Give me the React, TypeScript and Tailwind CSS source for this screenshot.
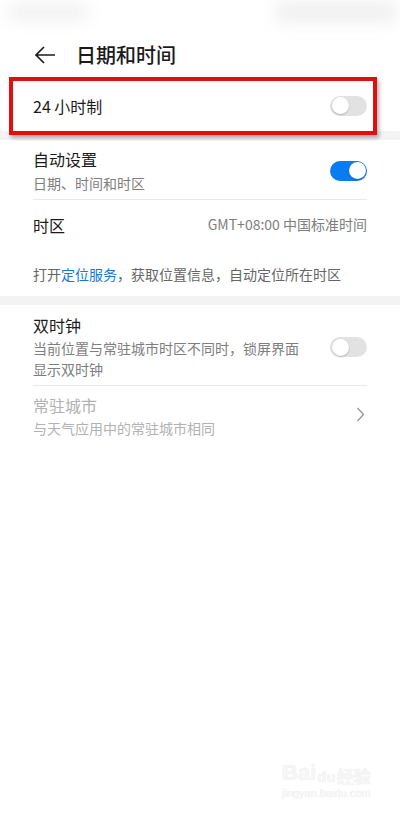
const font = "font-['Noto_Sans_CJK_SC','Noto_Sans',sans-serif]";

const Toggle = ({ on }: { on?: boolean }) => (
  <div
    className={`w-[37px] h-[20px] rounded-full flex items-center px-[1.5px] shrink-0 ${
      on ? "bg-[#0a7cf2] justify-end" : "bg-[#e2e2e2] justify-start"
    }`}
  >
    <div className="w-[17px] h-[17px] rounded-full bg-white shadow-[0_1px_2px_rgba(0,0,0,0.2)]" />
  </div>
);

const App = () => {
  return (
    <div className={`relative w-[400px] h-[816px] bg-white overflow-hidden text-[#1b1b1b] ${font}`}>
      {/* blurred status bar */}
      <div className="h-[30px] flex justify-between items-start pt-[2px]">
        <div className="w-[80px] h-[20px] bg-[#f4f4f4] blur-[7px] ml-[8px]" />
        <div className="w-[120px] h-[20px] bg-[#efefef] blur-[8px] mr-[4px]" />
      </div>

      {/* header */}
      <div className="h-[50px] flex items-center">
        <svg width="22" height="18" viewBox="0 0 22 18" className="ml-[34px]">
          <path d="M21 9H2M10 1L2 9l8 8" fill="none" stroke="#1b1b1b" strokeWidth="1.7" />
        </svg>
        <span className="ml-[20px] text-[20px] leading-none font-medium">日期和时间</span>
      </div>

      {/* 24h row with annotation */}
      <div className="relative h-[51px] flex items-center justify-between pl-[33px] pr-[33px]">
        <span className="text-[16px]">24 小时制</span>
        <Toggle />
        <div className="absolute left-[9px] top-[-3px] w-[368px] h-[58px] border-[4px] border-[#e30f0f] shadow-[2px_3px_4px_rgba(0,0,0,0.3)] z-10" />
      </div>

      <div className="h-[9px] bg-[#f3f3f3]" />

      {/* auto set */}
      <div className="flex items-center justify-between px-[33px] pt-[8px] pb-[6px]">
        <div className="flex flex-col">
          <span className="text-[16px] leading-[22px]">自动设置</span>
          <span className="mt-[3px] text-[14px] leading-[20px] text-[#7e7e7e]">日期、时间和时区</span>
        </div>
        <Toggle on />
      </div>
      <div className="mx-[33px] h-px bg-[#e9e9e9]" />

      <div className="h-[49px] flex items-center justify-between px-[33px]">
        <span className="text-[16px]">时区</span>
        <span className="text-[14px] text-[#7e7e7e]">GMT+08:00 中国标准时间</span>
      </div>

      <div className="px-[33px] pt-[15px] pb-[12px] text-[14px] leading-[20px] text-[#666]">
        打开<span className="text-[#1777d8]">定位服务</span>，获取位置信息，自动定位所在时区
      </div>

      <div className="h-[9px] bg-[#f3f3f3]" />

      {/* dual clock */}
      <div className="flex items-center justify-between px-[33px] pt-[9px] pb-[5px]">
        <div className="flex flex-col">
          <span className="text-[16px] leading-[22px]">双时钟</span>
          <span className="mt-[2px] text-[14px] leading-[21px] text-[#7e7e7e]">
            当前位置与常驻城市时区不同时，锁屏界面
            <br />
            显示双时钟
          </span>
        </div>
        <Toggle />
      </div>
      <div className="mx-[33px] h-px bg-[#e9e9e9]" />

      <div className="flex items-center justify-between px-[33px] pt-[8px] pb-[10px]">
        <div className="flex flex-col">
          <span className="text-[16px] leading-[22px] text-[#b2b2b2]">常驻城市</span>
          <span className="mt-[2px] text-[14px] leading-[20px] text-[#b2b2b2]">与天气应用中的常驻城市相同</span>
        </div>
        <svg width="9" height="15" viewBox="0 0 9 15" className="mr-[2px] mb-[4px]">
          <path d="M1.5 1l6 6.5-6 6.5" fill="none" stroke="#9a9a9a" strokeWidth="1.4" />
        </svg>
      </div>

      {/* watermark */}
      <div className="absolute left-[282px] top-[762px] flex flex-col items-center text-[#f6f6f6] [text-shadow:0_0_1px_#e2e2e2]">
        <div className="flex items-end font-['Liberation_Sans',sans-serif] text-[22px] font-bold leading-none">
          Bai<span className="text-[15px] mx-[1px]">du</span>
          <span className={`text-[17px] font-bold ${font}`}>经验</span>
        </div>
        <span className="mt-[4px] font-['Liberation_Sans',sans-serif] text-[11px] leading-none">jingyan.baidu.com</span>
      </div>
    </div>
  );
};

export default App;
